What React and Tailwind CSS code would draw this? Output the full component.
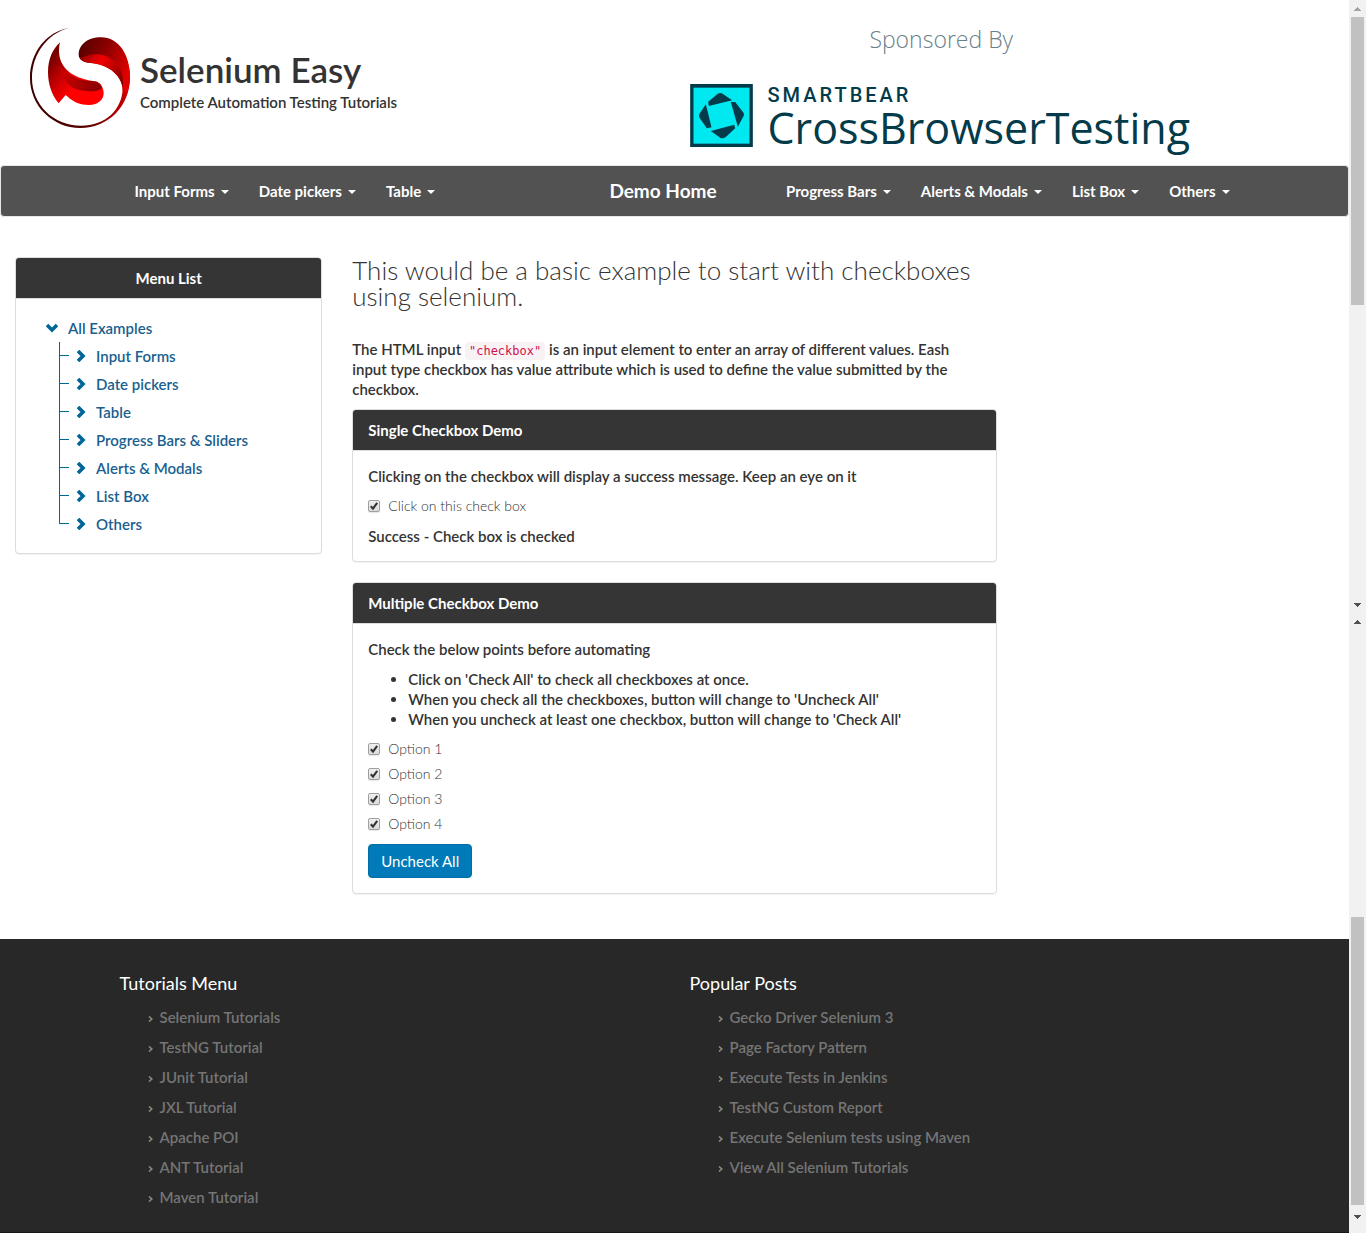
import { useId, useState } from "react";

const leftNav = ["Input Forms", "Date pickers", "Table"];
const rightNav = ["Progress Bars", "Alerts & Modals", "List Box", "Others"];
const menuItems = [
  "Input Forms",
  "Date pickers",
  "Table",
  "Progress Bars & Sliders",
  "Alerts & Modals",
  "List Box",
  "Others",
];
const tutorials = [
  "Selenium Tutorials",
  "TestNG Tutorial",
  "JUnit Tutorial",
  "JXL Tutorial",
  "Apache POI",
  "ANT Tutorial",
  "Maven Tutorial",
];
const posts = [
  "Gecko Driver Selenium 3",
  "Page Factory Pattern",
  "Execute Tests in Jenkins",
  "TestNG Custom Report",
  "Execute Selenium tests using Maven",
  "View All Selenium Tutorials",
];

function SeleniumEasyLogo() {
  return (
    <svg viewBox="12 12 300 300" className="size-[100px] shrink-0" role="img" aria-label="Selenium Easy logo">
      <defs>
        <linearGradient id="ring" gradientUnits="userSpaceOnUse" x1="20" y1="200" x2="312" y2="130">
          <stop offset="0" stopColor="#3d0000" />
          <stop offset="0.45" stopColor="#5a0000" />
          <stop offset="0.75" stopColor="#a80000" />
          <stop offset="1" stopColor="#e00000" />
        </linearGradient>
        <linearGradient id="fold" gradientUnits="userSpaceOnUse" x1="165" y1="70" x2="310" y2="130">
          <stop offset="0" stopColor="#5a0000" />
          <stop offset="0.45" stopColor="#8c0000" />
          <stop offset="1" stopColor="#e00000" />
        </linearGradient>
        <linearGradient id="band" gradientUnits="userSpaceOnUse" x1="160" y1="95" x2="300" y2="170">
          <stop offset="0" stopColor="#900000" />
          <stop offset="0.4" stopColor="#f20000" />
          <stop offset="0.75" stopColor="#b00000" />
          <stop offset="1" stopColor="#700000" />
        </linearGradient>
        <linearGradient id="tail" gradientUnits="userSpaceOnUse" x1="66" y1="120" x2="200" y2="225">
          <stop offset="0" stopColor="#7a0000" />
          <stop offset="0.4" stopColor="#d80000" />
          <stop offset="0.65" stopColor="#ff0000" />
        </linearGradient>
        <linearGradient id="shade" gradientUnits="userSpaceOnUse" x1="95" y1="150" x2="226" y2="190">
          <stop offset="0" stopColor="#d00000" />
          <stop offset="1" stopColor="#860000" />
        </linearGradient>
      </defs>
      <path
        fill="url(#ring)"
        d="M130 12C62 22 12 85 12 162A150 150 0 0 0 162 312C250 312 312 245 312 160C312 140 308 122 302 106L270 150C283 163 290 177 290 194C288 255 240 305 165 305C82 305 18 242 18 162C18 90 65 27 130 12Z"
      />
      <path
        fill="url(#fold)"
        d="M158 92C158 62 185 40 225 40C280 40 312 95 312 160C311 178 308 195 303 210L290 200C291 160 250 120 195 117C172 115 158 106 158 92Z"
      />
      <path
        fill="url(#band)"
        d="M162 104C185 90 215 86 240 96C276 112 296 145 290 190C284 150 245 122 195 117C178 115 167 111 162 104Z"
      />
      <path
        fill="url(#tail)"
        d="M102 55C92 100 104 158 205 172C223 173 233 190 233 208C233 230 212 243 190 243C155 243 135 228 119 213L98 238C78 215 66 180 66 145C66 105 80 75 102 55Z"
      />
      <path
        fill="url(#shade)"
        d="M98 122C114 152 145 168 205 172C218 174 225 183 227 193C213 206 180 204 152 196C125 186 108 160 98 122Z"
      />
    </svg>
  );
}

function SmartBearMark() {
  return (
    <svg viewBox="0 0 188 189" className="h-[63px] w-[63px] shrink-0" aria-hidden="true">
      <rect width="188" height="189" fill="#033b4a" />
      <rect x="10" y="11" width="168" height="168" fill="#00e8f0" />
      <g fill="#033b4a">
        <path d="M54 53L83 29Q89 25 95 28L126 49L56 66Z" />
        <path d="M122 54L135 54L160 86Q163 91 160 97L143 128Z" />
        <path d="M62 141L132 122L135 133L106 160Q98 165 90 161Z" />
        <path d="M47 61L64 130L50 133L28 101Q25 95 28 89Z" />
      </g>
    </svg>
  );
}

function NavItem({ label }) {
  return (
    <li>
      <a href="#" className="flex items-center gap-[6px] px-[15px] py-[15px] whitespace-nowrap">
        {label}
        <span className="mt-px border-x-4 border-t-4 border-x-transparent border-t-white" />
      </a>
    </li>
  );
}

function Chevron({ down }) {
  return (
    <svg viewBox="0 0 12 12" className={down ? "size-3 rotate-90" : "size-3"} aria-hidden="true">
      <path d="M3 1L8 6L3 11" fill="none" stroke="#006699" strokeWidth="3.6" />
    </svg>
  );
}

function Panel({ title, center, children }) {
  return (
    <section className="mb-5 rounded border border-[#dddddd] bg-white shadow-[0_1px_1px_rgba(0,0,0,0.05)]">
      <h2
        className={
          center
            ? "rounded-t-[3px] border-b border-[#dddddd] bg-[#353535] px-[15px] py-[10px] text-center text-[15px] leading-5 font-bold text-white"
            : "rounded-t-[3px] border-b border-[#dddddd] bg-[#353535] px-[15px] py-[10px] text-[15px] leading-5 font-bold text-white"
        }
      >
        {title}
      </h2>
      <div className="p-[15px]">{children}</div>
    </section>
  );
}

function CheckRow({ label, checked, onChange, className }) {
  const id = useId();
  return (
    <div className={className}>
      <label htmlFor={id} className="flex h-5 w-fit items-center gap-2 text-[14px] font-light">
        <span className="grid size-3 place-items-center">
          <input
            id={id}
            type="checkbox"
            checked={checked}
            onChange={onChange}
            className="peer col-start-1 row-start-1 size-3 appearance-none rounded-[2px] border border-[#a0a0a0] bg-linear-to-b from-[#efefef] to-[#dcdcdc] shadow-[0_1px_1px_rgba(0,0,0,0.1)]"
          />
          <svg
            viewBox="0 0 12 12"
            className="pointer-events-none invisible col-start-1 row-start-1 size-3 peer-checked:visible"
            aria-hidden="true"
          >
            <path d="M2.8 6.2L5 8.6L9.2 2.8" fill="none" stroke="#333333" strokeWidth="2.1" />
          </svg>
        </span>
        {label}
      </label>
    </div>
  );
}

function FooterColumn({ title, items }) {
  return (
    <div className="px-[15px]">
      <h3 className="mb-[14px] text-[18px] leading-5 font-normal text-white">{title}</h3>
      <ul className="pl-7">
        {items.map((item) => (
          <li key={item} className="mb-[10px] flex h-5 items-center gap-[7px]">
            <svg viewBox="0 0 5 6" className="mt-[3px] h-[6px] w-[5px]" aria-hidden="true">
              <path d="M1 0.5L3.8 3L1 5.5" fill="none" stroke="#8a8a7c" strokeWidth="1.6" />
            </svg>
            <a href="#" className="text-[15px] font-semibold text-[#757575]">
              {item}
            </a>
          </li>
        ))}
      </ul>
    </div>
  );
}

function Arrow({ up, faded }) {
  return (
    <div className="flex h-[17px] shrink-0 items-center justify-center">
      <svg viewBox="0 0 7 4" className={up ? "h-1 w-[7px]" : "h-1 w-[7px] rotate-180"} aria-hidden="true">
        <path d="M3 0H4V1H5V2H6V3H7V4H0V3H1V2H2V1H3Z" fill={faded ? "#a3a3a3" : "#505050"} />
      </svg>
    </div>
  );
}

export default function App() {
  const [single, setSingle] = useState(true);
  const [options, setOptions] = useState([true, true, true, true]);
  const all = options.every(Boolean);

  return (
    <div className="flex min-h-screen bg-white font-['Lato',sans-serif] text-[15px] leading-5 font-semibold text-[#333333]">
      <div className="flex min-w-0 flex-1 flex-col">
        <header className="grid grid-cols-2 pb-[11px]">
          <div className="flex items-start gap-[10px] pt-7 pl-[30px]">
            <SeleniumEasyLogo />
            <div className="pt-[22px]">
              <h1 className="mb-1 text-[35px] leading-[38px]">Selenium Easy</h1>
              <p>Complete Automation Testing Tutorials</p>
            </div>
          </div>
          <div className="px-[15px] pt-[23px] font-['Open_Sans',sans-serif]">
            <div className="w-fit">
              <p className="mb-[29px] pl-[3px] text-center text-[23px] leading-8 font-light text-[#6b7f8a]">
                Sponsored By
              </p>
              <a href="#" className="flex gap-[15px] text-[#033b4a]">
                <SmartBearMark />
                <span className="flex flex-col">
                  <span className="h-[22px] font-['Roboto',sans-serif] text-[20px] leading-[22px] font-medium tracking-[3px]">
                    SMARTBEAR
                  </span>
                  <span className="text-[43px] leading-[44px] font-normal">CrossBrowserTesting</span>
                </span>
              </a>
            </div>
          </div>
        </header>

        <nav className="mt-1 rounded border border-[#e7e7e7] bg-[#525252] text-white">
          <div className="mx-auto grid max-w-[1140px] grid-cols-[1fr_auto_1fr] items-center pl-[15px] text-[15px] font-bold">
            <ul className="flex">
              {leftNav.map((item) => (
                <NavItem key={item} label={item} />
              ))}
            </ul>
            <a href="#" className="pr-[38px] text-[19px]">
              Demo Home
            </a>
            <ul className="flex justify-end">
              {rightNav.map((item) => (
                <NavItem key={item} label={item} />
              ))}
            </ul>
          </div>
        </nav>

        <main className="grid grid-cols-4 pt-10 pb-[25px]">
          <aside className="px-[15px]">
            <Panel title="Menu List" center>
              <ul className="text-[#1a5f90]">
                <li>
                  <a href="#" className="flex h-7 items-center gap-[10px] pl-[15px]">
                    <Chevron down />
                    All Examples
                  </a>
                  <ul className="pl-7">
                    {menuItems.map((item) => (
                      <li key={item} className="group flex h-7">
                        <span className="h-full w-px bg-[#006699] group-last:h-[14px]" />
                        <span className="mt-[13px] h-px w-[9px] bg-[#006699]" />
                        <a href="#" className="flex items-center gap-[9px] pl-[6px]">
                          <Chevron />
                          {item}
                        </a>
                      </li>
                    ))}
                  </ul>
                </li>
              </ul>
            </Panel>
          </aside>

          <div className="col-span-2 px-[15px]">
            <h2 className="mb-[30px] text-[26px] leading-[26px] font-light">
              This would be a basic example to start with checkboxes using selenium.
            </h2>
            <p className="mb-[10px] pr-5">
              The HTML input{" "}
              <code className="rounded bg-[#f9f2f4] px-1 py-[2px] font-['DejaVu_Sans_Mono',monospace] text-[12px] leading-none font-normal text-[#d0104c]">
                "checkbox"
              </code>{" "}
              is an input element to enter an array of different values. Eash input type checkbox has value attribute
              which is used to define the value submitted by the checkbox.
            </p>

            <Panel title="Single Checkbox Demo">
              <p className="mb-[10px]">
                Clicking on the checkbox will display a success message. Keep an eye on it
              </p>
              <CheckRow
                label="Click on this check box"
                checked={single}
                onChange={() => setSingle(!single)}
                className="mb-[10px]"
              />
              <p className="min-h-5">{single ? "Success - Check box is checked" : ""}</p>
            </Panel>

            <Panel title="Multiple Checkbox Demo">
              <p className="mb-[10px]">Check the below points before automating</p>
              <ul className="mb-[10px] list-disc pl-10">
                <li>Click on 'Check All' to check all checkboxes at once.</li>
                <li>When you check all the checkboxes, button will change to 'Uncheck All'</li>
                <li>When you uncheck at least one checkbox, button will change to 'Check All'</li>
              </ul>
              {options.map((value, i) => (
                <CheckRow
                  key={i}
                  label={`Option ${i + 1}`}
                  checked={value}
                  onChange={() => setOptions(options.map((v, j) => (j === i ? !v : v)))}
                  className="mb-[5px]"
                />
              ))}
              <button
                type="button"
                onClick={() => setOptions(options.map(() => !all))}
                className="mt-[10px] block rounded border border-[#006ea6] bg-[#007ab8] px-3 py-[6px] text-[15px] font-normal text-white"
              >
                {all ? "Uncheck All" : "Check All"}
              </button>
            </Panel>
          </div>
        </main>

        <footer className="flex-1 border-b border-[#151515] bg-[#282828] pt-[34px]">
          <div className="mx-auto grid max-w-[1140px] grid-cols-2">
            <FooterColumn title="Tutorials Menu" items={tutorials} />
            <FooterColumn title="Popular Posts" items={posts} />
          </div>
        </footer>
      </div>

      <div className="flex w-[17px] shrink-0 flex-col bg-[#f1f1f1]" aria-hidden="true">
        <div className="flex h-[613px] flex-col">
          <Arrow up faded />
          <div className="mx-[2px] h-72 bg-[#c1c1c1]" />
          <div className="flex-1" />
          <Arrow />
        </div>
        <div className="flex flex-1 flex-col pb-2">
          <Arrow up />
          <div className="flex-1" />
          <div className="mx-[2px] mb-[3px] h-72 bg-[#c1c1c1]" />
          <Arrow />
        </div>
      </div>
    </div>
  );
}
